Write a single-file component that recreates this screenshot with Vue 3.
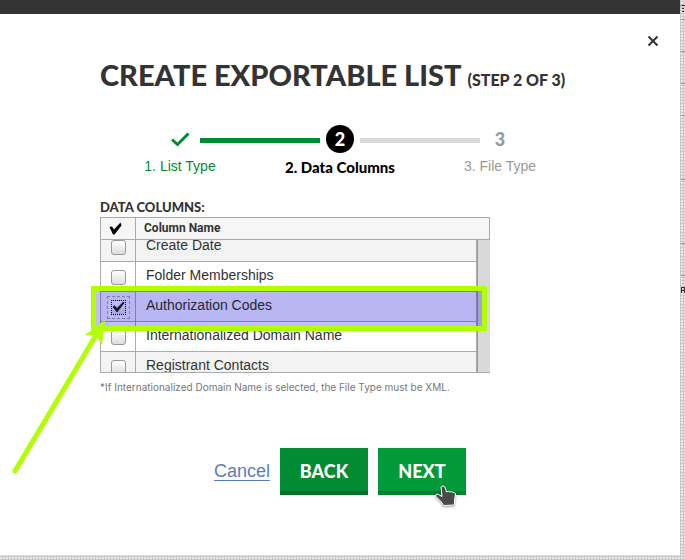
<template>
  <div class="modal">
    <button class="close" type="button" aria-label="Close">
      <svg width="12" height="12" viewBox="0 0 12 12">
        <path d="M1.5 1.5 L10.5 10.5 M10.5 1.5 L1.5 10.5" />
      </svg>
    </button>

    <h1 class="title">CREATE EXPORTABLE LIST <small>(STEP 2 OF 3)</small></h1>

    <ol class="steps">
      <li v-for="step in steps" :key="step.number" class="step" :class="step.state">
        <span class="marker">
          <svg v-if="step.state === 'done'" width="20" height="16" viewBox="0 0 20 16">
            <path d="M2 8.5 L7.5 13.5 L18.5 2.5" />
          </svg>
          <template v-else>{{ step.number }}</template>
        </span>
        <span class="step-label">{{ step.number }}. {{ step.label }}</span>
      </li>
    </ol>

    <h2 class="section-title">DATA COLUMNS:</h2>

    <div class="columns">
      <div class="columns-head">
        <span class="head-check">
          <svg width="13" height="13" viewBox="0 0 13 13">
            <path d="M0.5 5 L3 4.5 L5 7.5 L11.5 0.5 L12.5 3.5 L5.5 12.5 L4 12.5 Z" />
          </svg>
        </span>
        <span class="head-name">Column Name</span>
      </div>
      <div ref="scroller" class="columns-body">
        <table class="column-table">
          <tbody>
            <tr v-for="column in columns" :key="column.id">
              <td class="cell-check">
                <input :id="column.id" v-model="column.selected" type="checkbox" />
              </td>
              <td><label :for="column.id">{{ column.name }}</label></td>
            </tr>
          </tbody>
        </table>
      </div>
      <div class="highlight"></div>
      <svg class="arrow" width="100" height="160" viewBox="0 0 100 160">
        <path class="shaft" d="M8 154 L88 20" />
        <path class="head" d="M98 3 L78 18 L86 18 L91 21 L95 28 Z" />
      </svg>
    </div>

    <p class="note">*If Internationalized Domain Name is selected, the File Type must be XML.</p>

    <div class="actions">
      <a class="cancel" href="#">Cancel</a>
      <button class="btn" type="button">BACK</button>
      <button class="btn active" type="button">
        NEXT
        <svg class="cursor" width="24" height="24" viewBox="0 0 24 24">
          <path d="M7 3 Q9 0.5 11 3 L12.5 8 Q14.5 6.5 16 8 Q18 7 19 8.5 Q21 8 21.5 10 L20.5 16 L20.5 21 L9.5 21.5 L7 17.5 L1.5 12 Q2 9 4.5 10.5 L8 12.5 Z" />
        </svg>
      </button>
    </div>
  </div>

  <svg class="edge-marks" width="4" height="300" viewBox="0 0 4 300">
    <path class="dark" d="M0 5.5 H4 M1 8.5 H3 M1 11.5 H3 M0 287.5 H4 M0 290.5 H4 M0.5 287 V293 M3.5 287 V293" />
    <path class="mid" d="M0 19.5 H4 M0 51.5 H4 M0 83.5 H4 M0 115.5 H4 M0 179.5 H4 M0 243.5 H4 M0 275.5 H4" />
  </svg>
</template>

<script setup>
import { onMounted, ref } from 'vue';

const steps = [
  { number: 1, label: 'List Type', state: 'done' },
  { number: 2, label: 'Data Columns', state: 'current' },
  { number: 3, label: 'File Type', state: 'upcoming' }
];

const columns = ref([
  { id: 'create-date', name: 'Create Date', selected: false },
  { id: 'folders', name: 'Folder Memberships', selected: false },
  { id: 'auth-codes', name: 'Authorization Codes', selected: true },
  { id: 'idn', name: 'Internationalized Domain Name', selected: false },
  { id: 'contacts', name: 'Registrant Contacts', selected: false }
]);

const scroller = ref(null);

onMounted(() => {
  scroller.value.scrollTop = 8;
});
</script>

<style>
body {
  margin: 0;
  background-color: #e8e8e8;
  background-image:
    linear-gradient(90deg, #c8c8c8 1px, transparent 1px),
    linear-gradient(#c8c8c8 1px, transparent 1px);
  background-size: 3px 3px;
  background-position: 2px 1px;
}
</style>

<style scoped>
.modal {
  position: relative;
  box-sizing: border-box;
  margin: 0 5px 5px 0;
  padding: 43px 100px 60px;
  border-top: 14px solid #333;
  background: #fff;
  color: #333;
  font-family: "Liberation Sans", Arial, sans-serif;
}

.close {
  position: absolute;
  top: 21px;
  right: 21px;
  display: flex;
  padding: 0;
  border: 0;
  background: none;
}

.close path {
  stroke: #333;
  stroke-width: 2;
}

.title {
  margin: 0;
  font: 900 29px/36px Lato, sans-serif;
  white-space: nowrap;
}

.title small {
  font-size: 16px;
}

.steps {
  display: grid;
  grid-template-columns: repeat(3, 1fr);
  margin: 27px 0 0;
  padding: 0;
  list-style: none;
}

.step {
  position: relative;
  display: flex;
  flex-direction: column;
  align-items: center;
  gap: 3px;
  color: #999;
  font-size: 14px;
  line-height: 20px;
}

.step + .step::before {
  content: "";
  position: absolute;
  top: 13px;
  right: calc(50% + 20px);
  left: calc(20px - 50%);
  height: 5px;
  background: #d9d9d9;
}

.step.current::before {
  background: #008a32;
}

.marker {
  display: flex;
  align-items: center;
  justify-content: center;
  width: 28px;
  height: 28px;
  border-radius: 50%;
  font: 900 18px/28px Lato, sans-serif;
}

.marker path {
  fill: none;
  stroke: #008a32;
  stroke-width: 3;
}

.done {
  color: #008a32;
}

.current {
  color: #000;
}

.current .marker {
  background: #000;
  color: #fff;
}

.current .step-label {
  font: 900 15px/22px Lato, sans-serif;
}

.section-title {
  margin: 19px 0 0;
  font: 900 13px/20px Lato, sans-serif;
}

.columns {
  position: relative;
  max-width: 390px;
}

.columns-head {
  display: flex;
  box-sizing: border-box;
  height: 23px;
  border: 1px solid #aaa;
  background: #f6f6f6;
  font: bold 12px/21px Roboto, sans-serif;
}

.head-check {
  display: flex;
  align-items: center;
  justify-content: center;
  box-sizing: border-box;
  width: 35px;
  padding-right: 5px;
  border-right: 1px solid #aaa;
}

.head-check path {
  fill: #000;
}

.head-name {
  padding-left: 8px;
}

.columns-body {
  box-sizing: border-box;
  height: 133px;
  padding-right: 12px;
  overflow-y: auto;
  border-bottom: 1px solid #aaa;
  background: #d9d9d9;
  scrollbar-width: none;
}

.column-table {
  width: 100%;
  border-spacing: 0;
  border-right: 1px solid #999;
  border-left: 1px solid #aaa;
  background: #fff;
  font-size: 14px;
  line-height: 20px;
}

.column-table tr:nth-child(odd) {
  background: #f3f3f3;
}

.column-table td {
  box-sizing: border-box;
  height: 30px;
  padding: 0 10px 4px;
  border-bottom: 1px solid #aaa;
}

.column-table td:last-child {
  border-right: 1px solid #aaa;
}

.column-table .cell-check {
  width: 35px;
  padding: 1px 0 0;
  border-right: 1px solid #aaa;
}

input[type="checkbox"] {
  display: block;
  box-sizing: border-box;
  width: 15px;
  height: 15px;
  margin: 0 auto;
  border: 1px solid #999;
  border-radius: 3px;
  background: linear-gradient(#fff, #ddd);
  appearance: none;
}

input[type="checkbox"]:checked {
  border: 1px dotted #000;
  border-radius: 0;
  outline: 1px dashed #aaa;
  outline-offset: 3px;
}

input[type="checkbox"]:checked::before {
  content: "";
  display: block;
  width: 13px;
  height: 13px;
  background: #222;
  clip-path: polygon(8% 48%, 24% 36%, 42% 58%, 92% 8%, 100% 20%, 46% 88%, 38% 88%);
}

.highlight {
  position: absolute;
  top: 69px;
  right: 3px;
  left: -9px;
  box-sizing: border-box;
  height: 45px;
  border: 5px solid #b2ff00;
  pointer-events: none;
}

/* tint only, keeps the row text dark */
.highlight::before {
  content: "";
  display: block;
  height: 100%;
  background: #c1bfff;
  mix-blend-mode: multiply;
}

.arrow {
  position: absolute;
  top: 100px;
  left: -93px;
  pointer-events: none;
}

.arrow .shaft {
  stroke: #b2ff00;
  stroke-width: 5;
  stroke-linecap: round;
}

.arrow .head {
  fill: #b2ff00;
}

.note {
  margin: 6px 0 0;
  color: #777;
  font: 10px/16px Inter, sans-serif;
}

.actions {
  display: flex;
  align-items: center;
  justify-content: center;
  gap: 10px;
  margin-top: 53px;
}

.cancel {
  border-bottom: 1px solid #5b7db8;
  color: #5b7db8;
  font-size: 18px;
  line-height: 18px;
  text-decoration: none;
}

.btn {
  position: relative;
  box-sizing: border-box;
  width: 88px;
  height: 47px;
  padding: 4px 0 0;
  border: 0;
  border-bottom: 4px solid #00702a;
  background: #008a32;
  color: #fff;
  font: 900 18px/39px Lato, sans-serif;
}

.btn.active {
  border-bottom-color: #008030;
  background: #009a3a;
}

.cursor {
  position: absolute;
  right: 8px;
  bottom: -17px;
  filter: drop-shadow(0 1px 1px rgba(0, 0, 0, 0.4));
}

.cursor path {
  fill: #4a4a4a;
  stroke: #fff;
}

.edge-marks {
  position: absolute;
  top: 0;
  right: 0;
}

.edge-marks .dark {
  stroke: #333;
}

.edge-marks .mid {
  stroke: #999;
}
</style>
